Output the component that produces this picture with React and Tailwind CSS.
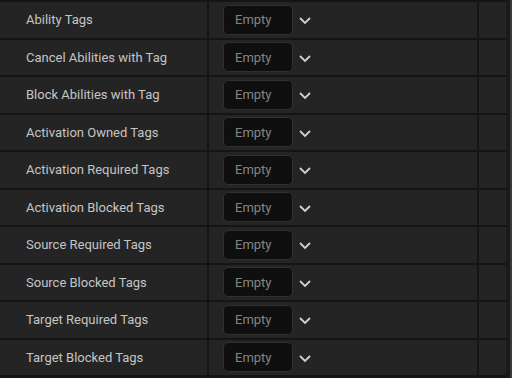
import React from "react";

const rows = [
  "Ability Tags",
  "Cancel Abilities with Tag",
  "Block Abilities with Tag",
  "Activation Owned Tags",
  "Activation Required Tags",
  "Activation Blocked Tags",
  "Source Required Tags",
  "Source Blocked Tags",
  "Target Required Tags",
  "Target Blocked Tags",
];

function Chevron() {
  return (
    <svg width="14" height="10" viewBox="0 0 14 10" className="ml-[5px] mt-px">
      <path d="M2 3 L7 8 L12 3" fill="none" stroke="#d0d0d0" strokeWidth="1.8" />
    </svg>
  );
}

export default function App() {
  return (
    <div
      className="w-[512px] h-[378px] bg-[#151515] flex overflow-hidden"
      style={{ fontFamily: "Roboto, 'Noto Sans', sans-serif" }}
    >
      <div className="flex-1 flex flex-col gap-[2px] pt-[2px]">
        {rows.map((label) => (
          <div key={label} className="h-[35.5px] shrink-0 flex gap-[2px]">
            {/* Label */}
            <div className="w-[207px] bg-[#242424] flex items-center pl-[26px] text-[13px] text-[#c4c4c4]">
              {label}
            </div>
            {/* Value */}
            <div className="w-[268px] bg-[#242424] flex items-center pl-[14px]">
              <div className="w-[70px] h-[30px] rounded-[5px] bg-[#0f0f0f] border border-[#303030] flex items-center pl-[11px] text-[13px] text-[#858585]">
                Empty
              </div>
              <Chevron />
            </div>
            {/* Extra */}
            <div className="w-[27px] bg-[#242424]" />
          </div>
        ))}
      </div>
      <div className="w-[6px] flex">
        <div className="w-[4px] bg-[#1a1a1a]" />
        <div className="w-[2px] bg-[#3a3a3a]" />
      </div>
    </div>
  );
}
